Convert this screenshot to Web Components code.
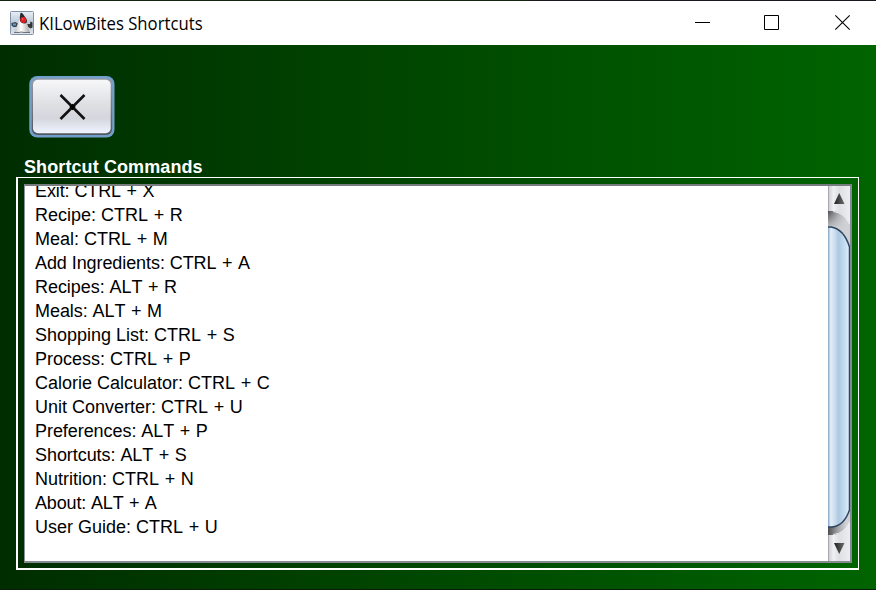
<!DOCTYPE html>
<html lang="en"><head><meta charset="utf-8"><title>KILowBites Shortcuts</title>
<style>html,body{margin:0;width:876px;height:590px;overflow:hidden}</style></head>
<body>
<app-window heading="KILowBites Shortcuts">
  <nimbus-button></nimbus-button>
  <titled-panel heading="Shortcut Commands">
    <scroll-pane>
      <shortcut-row name="Exit" keys="CTRL + X" style="letter-spacing:-.1px"></shortcut-row>
      <shortcut-row name="Recipe" keys="CTRL + R"></shortcut-row>
      <shortcut-row name="Meal" keys="CTRL + M"></shortcut-row>
      <shortcut-row name="Add Ingredients" keys="CTRL + A" style="letter-spacing:-.08px"></shortcut-row>
      <shortcut-row name="Recipes" keys="ALT + R" style="letter-spacing:-.05px"></shortcut-row>
      <shortcut-row name="Meals" keys="ALT + M" style="letter-spacing:-.06px"></shortcut-row>
      <shortcut-row name="Shopping List" keys="CTRL + S"></shortcut-row>
      <shortcut-row name="Process" keys="CTRL + P"></shortcut-row>
      <shortcut-row name="Calorie Calculator" keys="CTRL + C"></shortcut-row>
      <shortcut-row name="Unit Converter" keys="CTRL + U"></shortcut-row>
      <shortcut-row name="Preferences" keys="ALT + P" style="letter-spacing:-.06px"></shortcut-row>
      <shortcut-row name="Shortcuts" keys="ALT + S" style="letter-spacing:-.06px"></shortcut-row>
      <shortcut-row name="Nutrition" keys="CTRL + N"></shortcut-row>
      <shortcut-row name="About" keys="ALT + A" style="letter-spacing:-.15px"></shortcut-row>
      <shortcut-row name="User Guide" keys="CTRL + U"></shortcut-row>
    </scroll-pane>
  </titled-panel>
</app-window>
<script>
const define = (name, render) => customElements.define(name, class extends HTMLElement {
  constructor() { super(); this.attachShadow({ mode: 'open' }); }
  connectedCallback() { this.shadowRoot.innerHTML = render(this); }
});

define('duke-icon', () => `
<style>:host{display:block;width:24px;height:24px}svg{display:block}</style>
<svg width="24" height="24" viewBox="0 0 24 24">
  <defs><linearGradient id="b" x1="0" y1="0" x2="0" y2="1"><stop offset="0" stop-color="#e9eff5"/><stop offset=".5" stop-color="#b9c8d8"/><stop offset="1" stop-color="#dfe6ed"/></linearGradient>
  <linearGradient id="w"><stop offset="0" stop-color="#b9b9b9"/><stop offset=".45" stop-color="#fff"/><stop offset="1" stop-color="#a5a5a5"/></linearGradient></defs>
  <rect x=".5" y=".5" width="23" height="23" rx="1" fill="url(#b)" stroke="#8093a9"/>
  <path d="M1.500 12l4-1 3 2-1 3-4 0-2-1.500z" fill="#3b434c"/><path d="M3 12.500h3v2H3z" fill="#5d9ccc"/>
  <path d="M17 13l3 0 .5-2.500 2 1v5l-2 1-3-2z" fill="#353535"/>
  <path d="M9.500 9Q8 12 6 17L4 21.500h6l3-.5 3 .5h4l-1.500-4.500Q17.500 13 15.500 9z" fill="url(#w)"/>
  <path d="M10.500 2Q11.500 1 13 3L16.500 8Q18 12 15 12.500Q12 13 10 10Q9.500 5 10.500 2z" fill="#292b30"/>
  <circle cx="13.300" cy="9" r="3" fill="#e41e20"/><circle cx="12.700" cy="8" r=".8" fill="#ff6b60"/>
  <path d="M4 21.500h5l2-.5 3 .5h6" fill="none" stroke="#54585c" stroke-width=".8"/>
</svg>`);

define('title-bar', el => `
<style>
:host{display:flex;box-sizing:border-box;height:45px;border-top:1px solid #17251a;background:#fff;padding-left:10px;align-items:center;
 border-image:linear-gradient(90deg,#12260f 0 530px,#1c171f 530px) 1;font:18.4px/24px "Open Sans","Noto Sans",sans-serif;color:#000}
duke-icon{margin:-1px 5px 0 0}
.name{flex:1;white-space:nowrap}
.name span{display:inline-block;transform-origin:0 50%;transform:scaleX(.908)}
svg{display:block}
</style>
<duke-icon></duke-icon><div class="name"><span>${el.getAttribute('heading')}</span></div>
<svg width="204" height="44" viewBox="0 0 204 44" fill="none" stroke="#000">
 <path d="M23 21.500h15"/><path d="M92.500 14.500h14v14h-14z"/><path d="M163.300 14.300l14.400 14.400M177.700 14.300l-14.400 14.400" stroke-width="1.100"/>
</svg>`);

define('app-window', el => `
<style>
:host{display:flex;flex-direction:column;width:876px;height:590px;box-sizing:border-box}
main{flex:1;box-sizing:border-box;display:flex;flex-direction:column;align-items:flex-start;padding:31px 17px 0 16px;
 background:linear-gradient(90deg,#002d00,#006400);border-bottom:1px solid #0a1c0a}
</style>
<title-bar heading="${el.getAttribute('heading')}"></title-bar><main><slot></slot></main>`);

define('nimbus-button', () => `
<style>
:host{display:block;width:86px;height:62px;margin-left:13px}
svg{display:block}
</style>
<svg width="86" height="62" viewBox="0 0 86 62">
 <defs><linearGradient id="f" x1="0" y1="0" x2="0" y2="1"><stop offset="0" stop-color="#f7f7f9"/><stop offset=".45" stop-color="#dfe0e4"/><stop offset=".72" stop-color="#d4d6dd"/><stop offset="1" stop-color="#f0f4ff"/></linearGradient>
 <linearGradient id="s" x1="0" y1="0" x2="0" y2="1"><stop offset="0" stop-color="#989ba3"/><stop offset="1" stop-color="#52565e"/></linearGradient></defs>
 <rect x=".3" y="0" width="85.200" height="61.500" rx="8" fill="#73a0cb"/>
 <rect x="2.700" y="2.500" width="80.500" height="56.500" rx="6" fill="url(#s)"/>
 <rect x="4" y="3.800" width="77.700" height="53.500" rx="5" fill="url(#f)"/>
 <path d="M31.500 19l24 24M55.500 19l-24 24" stroke="#111" stroke-width="2.600"/>
 <path d="M40.300 31l3.200-3.200 3.200 3.200-3.200 3.200z" fill="#000"/>
</svg>`);

define('titled-panel', el => `
<style>
:host{display:block;width:843px;margin-top:18px}
h2{margin:0 0 0 8px;height:21px;font:bold 18px/22px "Liberation Sans",Arial,sans-serif;color:#fff;white-space:nowrap;letter-spacing:.1px}
.frame{box-sizing:border-box;height:393px;border:solid #fff;border-width:1px 1px 2px 2px;padding:6px}
</style>
<h2>${el.getAttribute('heading')}</h2><div class="frame"><slot></slot></div>`);

define('scroll-pane', () => `
<style>
:host{display:flex;box-sizing:border-box;width:828px;height:379px;border:1px solid #8b8f98;border-top:2px solid #777c80;border-right:2px solid #858b91;border-bottom:2px solid #858b91;background:#fff;overflow:hidden}
.view{flex:1;min-width:0;overflow:hidden}
.rows{margin:-7px 0 0 10px}
</style>
<div class="view"><div class="rows"><slot></slot></div></div><nimbus-scrollbar></nimbus-scrollbar>`);

define('shortcut-row', el => `
<style>:host{display:block;height:24px;font:18px/24px "Liberation Sans",Arial,sans-serif;font-kerning:none;color:#000;white-space:nowrap}.keys{word-spacing:.6px}</style>${el.getAttribute('name')}: <span class="keys">${el.getAttribute('keys')}</span>`);

define('nimbus-scrollbar', () => `
<style>:host{display:block;width:22px;height:375px}svg{display:block}</style>
<svg width="22" height="375" viewBox="0 0 22 375">
 <defs>
 <linearGradient id="bg"><stop offset="0" stop-color="#c9cbcf"/><stop offset=".25" stop-color="#f0f0f3"/><stop offset=".5" stop-color="#dedfe3"/><stop offset="1" stop-color="#edeef1"/></linearGradient>
 <linearGradient id="tr"><stop offset="0" stop-color="#4e4e50"/><stop offset=".45" stop-color="#a2a3a6"/><stop offset=".8" stop-color="#d0d1d4"/></linearGradient>
 <linearGradient id="hl" x1="0" y1="0" x2="0" y2="1"><stop offset="0" stop-color="#d0d1d4" stop-opacity="0"/><stop offset=".45" stop-color="#d0d1d4" stop-opacity=".9"/></linearGradient>
 <linearGradient id="th"><stop offset="0" stop-color="#83a5c6"/><stop offset=".12" stop-color="#e3edf7"/><stop offset=".3" stop-color="#ccdeef"/><stop offset=".48" stop-color="#aec8e0"/><stop offset=".75" stop-color="#c5ddf1"/><stop offset="1" stop-color="#dff2ff"/></linearGradient>
 <linearGradient id="ar"><stop offset="0" stop-color="#222"/><stop offset="1" stop-color="#6b6b6b"/></linearGradient>
 </defs>
 <rect width="22" height="375" fill="url(#bg)"/><path d="M.5 0v375" stroke="#a6a8ae"/>
 <path d="M0 25H5Q16 26 22 38V336Q17 348 5 349H0z" fill="url(#tr)"/>
 <path d="M0 25H5Q16 26 22 38V62H0z" fill="url(#hl)"/>
 <path d="M5 25.500Q16 26.500 21.500 38M5 348.500Q17 347.500 21.500 336" fill="none" stroke="#f8f8fa" stroke-width=".8"/>
 <path d="M0 41H3Q16 43 22 61V324Q16 340 4 341H0z" fill="url(#th)"/>
 <path d="M0 41H3Q16 43 21.500 61V324Q16 340 4 341H0" fill="none" stroke="#2d4560" stroke-width="1.500"/>
 <path d="M6 18h10.500L11.200 7zM6 357h10.500l-5.300 11z" fill="url(#ar)"/>
</svg>`);
</script></body></html>
